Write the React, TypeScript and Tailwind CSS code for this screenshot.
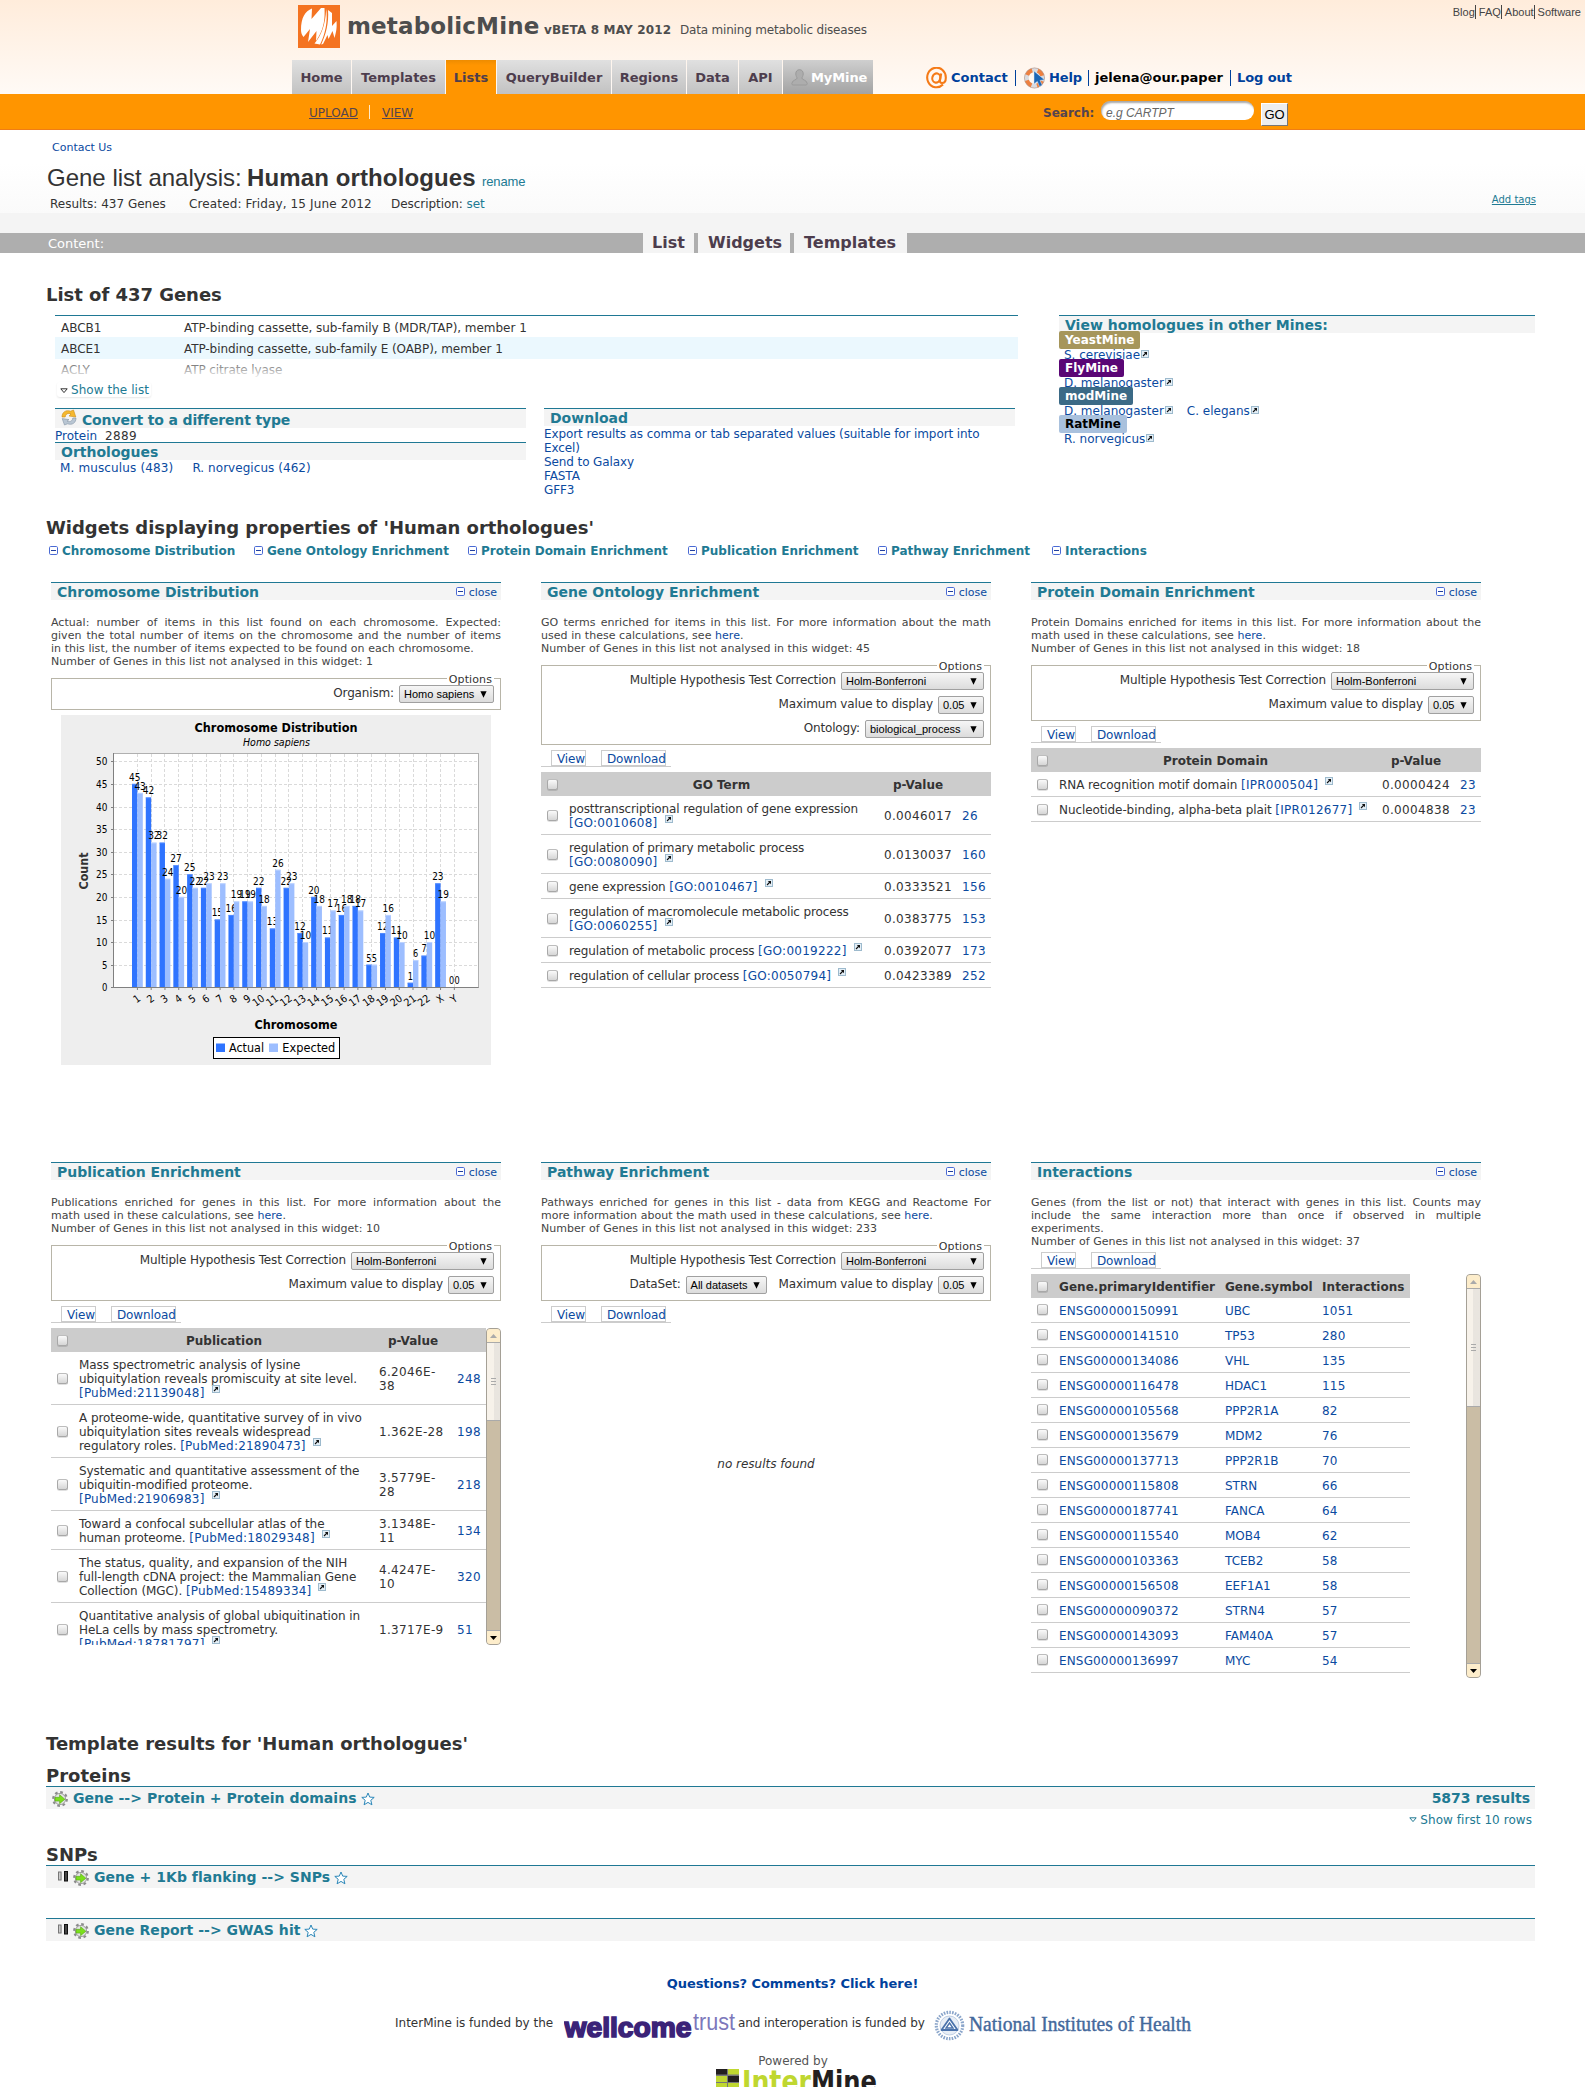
import type { ReactNode } from "react";

const ACTUAL = [45, 42, 32, 27, 25, 22, 15, 16, 19, 22, 13, 22, 12, 20, 11, 16, 18, 5, 12, 11, 1, 7, 23, 0];
const EXPECTED = [43, 32, 24, 20, 22, 23, 23, 19, 19, 18, 26, 23, 10, 18, 17, 18, 17, 5, 16, 10, 6, 10, 19, 0];
const CHROMOSOMES = [
  "1", "2", "3", "4", "5", "6", "7", "8", "9", "10", "11", "12",
  "13", "14", "15", "16", "17", "18", "19", "20", "21", "22", "X", "Y",
];

/* ---------- icons ---------- */

function MetabolicLogo() {
  return (
    <svg width="42" height="43" viewBox="0 0 42 43" className="block shrink-0">
      <rect width="42" height="43" fill="#f47321" />
      <g fill="#fff">
        <path d="M3 25C3 13 7 6 14 3.5L13.5 14L23 3H26.5C27 14 26 22 21 31L18 36L18.5 26L10 37L12 24L5.5 32C4 30 3 28 3 25Z" />
        <path d="M28.2 4C30 16 27 30 22 39.5L16.5 38.5C23 31 27.5 20 28.2 4Z" />
        <path d="M30 5L34 8V21L38.5 16C39 22 38.5 26 36.5 33L34.5 26L30.5 34L29.5 30L25 39L23.2 39.5C28 29 31 18 30 5Z" />
      </g>
    </svg>
  );
}

function MinusIcon() {
  return (
    <svg width="9" height="10" viewBox="0 0 9 10" className="inline-block shrink-0">
      <rect x="0.5" y="0.5" width="8" height="8" rx="1.2" fill="#fff" stroke="#4a6ad4" />
      <path d="M2 4.5H7" stroke="#22409f" />
    </svg>
  );
}

function ExternalIcon({ className = "" }: { className?: string }) {
  return (
    <svg width="8" height="8" viewBox="0 0 8 8" className={`inline-block shrink-0 ${className}`}>
      <rect x="0.5" y="0.5" width="7" height="7" fill="#e3eef6" stroke="#9dbacd" />
      <path d="M2 6L5 3" stroke="#111" strokeWidth="1.1" />
      <path d="M2.8 2H6V5.2Z" fill="#111" />
    </svg>
  );
}

function Triangle({ dark = false }: { dark?: boolean }) {
  return (
    <svg width="8" height="6" viewBox="0 0 8 6" className="block shrink-0">
      <path d="M0.8 0.8H7.2L4 4.6Z" fill="#fff" stroke={dark ? "#333" : "#217a93"} />
    </svg>
  );
}

function GearIcon() {
  return (
    <svg width="16" height="16" viewBox="0 0 16 16" className="block shrink-0">
      <circle cx="8" cy="8" r="6.6" fill="none" stroke="#8c8c8c" strokeWidth="2.6" strokeDasharray="2.6 2.58" />
      <circle cx="8" cy="8" r="5.6" fill="#e6e6e6" stroke="#a0a0a0" strokeWidth="1" />
      <path d="M3 6.3H7.6V3.7L12.9 8.2L7.6 12.7V10.1H3Z" fill="#7be01c" stroke="#55a516" strokeWidth="0.6" />
    </svg>
  );
}

function StarIcon() {
  return (
    <svg width="14" height="14" viewBox="0 0 14 14" className="block shrink-0">
      <path d="M7 1L8.7 5.1L13.2 5.4L9.8 8.3L10.9 12.8L7 10.4L3.1 12.8L4.2 8.3L0.8 5.4L5.3 5.1Z" fill="#fff" stroke="#2a86b8" strokeWidth="1" />
    </svg>
  );
}

function BarsIcon() {
  return (
    <svg width="10" height="11" viewBox="0 0 10 11" className="block shrink-0">
      <rect x="0.5" y="1" width="2.6" height="8" fill="#ccc" stroke="#777" />
      <rect x="6.5" y="0.5" width="3" height="9.5" fill="#444" stroke="#111" />
    </svg>
  );
}

function ConvertIcon() {
  return (
    <svg width="16" height="17" viewBox="0 0 16 17" className="block shrink-0">
      <path d="M1 8C1 3 5 0.6 9.5 2.2L12.5 1L14.8 8L8 7L10 5C7 3.6 4.5 5 4.2 8Z" fill="#f5b82e" stroke="#c98c17" strokeWidth="0.6" />
      <path d="M15 9C15 14 11 16.4 6.5 14.8L3.5 16L1.2 9.6L8 10.6L6 12.2C9 13.4 11.5 12 11.8 9Z" fill="#b9c6d3" stroke="#8394a5" strokeWidth="0.6" />
    </svg>
  );
}

function AtIcon() {
  return (
    <svg width="21" height="22" viewBox="0 0 21 22" className="block shrink-0" fill="none" stroke="#f57a17">
      <path d="M17 17.5A9.3 9.8 0 1 1 19.8 11C19.8 14.5 17.8 16 16 16C14.3 16 13.6 14.8 14 13L15.2 6.5" strokeWidth="2.1" />
      <ellipse cx="10.3" cy="11" rx="4" ry="4.6" strokeWidth="2.1" transform="rotate(15 10.3 11)" />
    </svg>
  );
}

function HelpIcon() {
  return (
    <svg width="22" height="22" viewBox="0 0 22 22" className="block shrink-0">
      <circle cx="10.5" cy="11" r="8" fill="none" stroke="#d9dbe0" strokeWidth="4.4" />
      <circle cx="10.5" cy="11" r="8" fill="none" stroke="#ee8040" strokeWidth="4" strokeDasharray="7 5.56" strokeDashoffset="-3" />
      <circle cx="10.5" cy="11" r="10.1" fill="none" stroke="#b08f80" strokeWidth="0.6" />
      <path d="M10 4V17L13.3 14.4L15.5 19.5L18.2 18.2L16 13.4L20.5 12.8Z" fill="#1c66b5" stroke="#d5e5f5" strokeWidth="0.5" />
    </svg>
  );
}

function PersonIcon() {
  return (
    <svg width="17" height="17" viewBox="0 0 17 17" className="block shrink-0">
      <path
        d="M8.5 0.7C11 0.7 12.3 2.6 12.2 5C12.1 7 11.3 8.2 10.8 9C11 11 16 11 16.2 14.5C16.2 15.6 15.5 16 14.8 16H2.2C1.5 16 0.8 15.6 0.8 14.5C1 11 6 11 6.2 9C5.7 8.2 4.9 7 4.8 5C4.7 2.6 6 0.7 8.5 0.7Z"
        fill="#adadad"
        stroke="#9a9a9a"
      />
    </svg>
  );
}

/* ---------- small controls ---------- */

function Checkbox() {
  return (
    <span className="block h-[11px] w-[11px] rounded-[2.5px] border border-[#a8a8a8] border-t-[#bdbdbd] bg-gradient-to-b from-[#fafafa] to-[#d6d6d6] shadow-[0_1px_0_rgba(0,0,0,0.12)]" />
  );
}

function Select({ label, width }: { label: string; width: string }) {
  return (
    <span
      className={`flex h-[18px] items-center justify-between rounded-[2px] border border-[#a0a0a0] bg-gradient-to-b from-[#f6f6f6] to-[#dcdcdc] pr-[6px] pl-[4px] font-['Liberation_Sans',sans-serif] text-[11px] leading-[16px] tracking-normal text-black ${width}`}
    >
      <span>{label}</span>
      <svg width="7" height="7" viewBox="0 0 7 7" className="block">
        <path d="M0.4 0.3H6.6L3.5 6.8Z" fill="#000" />
      </svg>
    </span>
  );
}

type Option = { label: string; value: string; width: string };

const HOLM: Option = { label: "Multiple Hypothesis Test Correction", value: "Holm-Bonferroni", width: "w-[143px]" };
const MAXV: Option = { label: "Maximum value to display", value: "0.05", width: "w-[46px]" };

function Options({ rows }: { rows: Option[][] }) {
  return (
    <div className="relative mt-[7px] flex flex-col gap-[6px] border border-[#b8b5a8] px-[6px] pt-[6px] pb-[6px] tracking-[-0.15px]">
      <span className="absolute -top-[6px] right-[6px] bg-white px-[2px] text-[11px] leading-[13px] tracking-[0.1px]">Options</span>
      {rows.map((row, i) => (
        <div key={i} className="relative flex h-[18px] justify-end gap-[12px]">
          {row.map((o) => (
            <div key={o.label} className="flex gap-[5px]">
              <span className="leading-[16px]">{o.label}</span>
              <Select label={o.value} width={o.width} />
            </div>
          ))}
        </div>
      ))}
    </div>
  );
}

function ViewTabs() {
  return (
    <div className="flex h-[17px] w-[130px] border-b border-[#ccc] pl-[10px] tracking-[-0.12px] text-[#0b4a9f]">
      <span className="h-[16px] w-[35px] border border-[#ccc] pl-[5px] leading-[17px]">View</span>
      <span className="ml-[15px] h-[16px] w-[65px] border border-[#ccc] pl-[5px] leading-[17px]">Download</span>
    </div>
  );
}

function Here() {
  return <span className="text-[#0b4a9f]">here</span>;
}

function Widget({ title, lines, count, children }: { title: string; lines: ReactNode[]; count: string; children?: ReactNode }) {
  return (
    <section className="w-[450px] shrink-0">
      <div className="flex h-[18px] justify-between border-t border-[#1f7894] bg-[#f4f4f4] pr-[4px] pl-[6px]">
        <h3 className="text-[14px] leading-[18px] font-bold text-[#217a93]">{title}</h3>
        <span className="flex gap-[4px] text-[11px] leading-[19px] text-[#0b4a9f]">
          <span className="pt-[3px] leading-none"><MinusIcon /></span>close
        </span>
      </div>
      <div className="mt-[16px] text-[11px] leading-[13px] tracking-[0.04px] text-[#444]">
        {lines.map((l, i) => (
          <p key={i} className={i < lines.length - 1 ? "[text-align-last:justify] whitespace-nowrap" : "whitespace-nowrap"}>
            {l}
          </p>
        ))}
        <p className="whitespace-nowrap">Number of Genes in this list not analysed in this widget: {count}</p>
      </div>
      {children}
    </section>
  );
}

type Hit = { text: string[]; id: string; p: string[]; n: string; idOnOwnLine?: boolean };

function EnrichmentTable({
  head,
  rows,
  cols,
  text = "tracking-[-0.13px]",
  link = "tracking-[0.26px]",
}: {
  head: string;
  rows: Hit[];
  cols: string;
  text?: string;
  link?: string;
}) {
  return (
    <div>
      <div className={`grid h-[24px] items-center bg-[#ccc] pt-[2px] font-bold ${cols}`}>
        <span className="pb-[2px] pl-[6px]"><Checkbox /></span>
        <span className="text-center">{head}</span>
        <span className="text-center">p-Value</span>
        <span />
      </div>
      {rows.map((r) => (
        <div key={r.id} className={`grid items-center border-b border-[#ccc] pt-[6px] pb-[4px] leading-[14px] ${cols}`}>
          <span className="pb-[2px] pl-[6px]"><Checkbox /></span>
          <span className={`pl-[5px] whitespace-nowrap ${text}`}>
            {r.text.map((t, i) => (
              <span key={i}>
                {t}
                {i < r.text.length - 1 || r.idOnOwnLine ? <br /> : " "}
              </span>
            ))}
            <span className={`text-[#0b4a9f] ${link}`}>[{r.id}]</span>
            <ExternalIcon className="relative -top-[4px] ml-[7px] align-baseline" />
          </span>
          <span className="pl-[5px] tracking-[0.33px]">
            {r.p.map((t) => (
              <span key={t} className="block">{t}</span>
            ))}
          </span>
          <span className="pl-[5px] tracking-[0.33px] text-[#0b4a9f]">{r.n}</span>
        </div>
      ))}
    </div>
  );
}

function Scrollbar({ thumb }: { thumb: string }) {
  return (
    <div className="flex w-[15px] shrink-0 flex-col overflow-hidden rounded-[4px] border border-[#a5a096] bg-[#cabda5]">
      <span className="flex h-[14px] shrink-0 items-center justify-center border-b border-[#aaa] bg-[#fdedcb]">
        <svg width="7" height="4" viewBox="0 0 7 4"><path d="M0 4L3.5 0L7 4Z" fill="#aaa" /></svg>
      </span>
      <span className={`flex shrink-0 flex-col items-center justify-center gap-[2px] border-b border-[#aaa] bg-gradient-to-r from-[#f7f2ea] from-50% to-[#e9e5df] to-50% ${thumb}`}>
        <i className="block h-px w-[5px] bg-[#aaa]" />
        <i className="block h-px w-[5px] bg-[#aaa]" />
        <i className="block h-px w-[5px] bg-[#aaa]" />
      </span>
      <span className="mt-auto flex h-[14px] shrink-0 items-center justify-center border-t border-[#aaa] bg-[#fdedcb]">
        <svg width="7" height="4" viewBox="0 0 7 4"><path d="M0 0L3.5 4L7 0Z" fill="#000" /></svg>
      </span>
    </div>
  );
}

/* ---------- chart ---------- */

const X0 = 76.4;
const STEP = 13.78;
const BASE = 272.3;
const UNIT = 4.52;

function BarSeries({ data, offset, color, edge }: { data: number[]; offset: number; color: string; edge: string }) {
  return (
    <g>
      {data.map((v, i) => {
        const x = X0 + i * STEP + offset;
        const y = BASE - v * UNIT;
        const label = String(v);
        return (
          <g key={i}>
            {v > 0 && <rect x={x} y={y} width="5.4" height={v * UNIT} fill={color} />}
            {v > 0 && <path d={`M${x} ${y + 0.4}H${x + 5.4}`} stroke={edge} strokeWidth="0.8" />}
            <text
              x={x + 2.7}
              y={y - 3.2}
              textAnchor="middle"
              fontSize="10.5"
              textLength={label.length === 2 ? 11.4 : 5.2}
              lengthAdjust="spacingAndGlyphs"
            >
              {label}
            </text>
          </g>
        );
      })}
    </g>
  );
}

function ChromosomeChart() {
  const ticks = [0, 5, 10, 15, 20, 25, 30, 35, 40, 45, 50];
  return (
    <svg width="430" height="350" viewBox="0 0 430 350" className="mt-[5px] ml-[10px] block font-['DejaVu_Sans',sans-serif]">
      <rect width="430" height="350" fill="#eee" />
      <text x="215" y="16.5" textAnchor="middle" fontSize="12" fontWeight="700" textLength="163" lengthAdjust="spacingAndGlyphs">Chromosome Distribution</text>
      <text x="215.5" y="31" textAnchor="middle" fontSize="10" fontStyle="italic" textLength="67" lengthAdjust="spacingAndGlyphs">Homo sapiens</text>
      <rect x="52.5" y="38.5" width="365" height="234" fill="#fff" stroke="#b0b0b0" />
      <g stroke="#dadada" strokeDasharray="3 2">
        {ticks.slice(1).map((t) => <path key={t} d={`M53 ${Math.round(BASE - t * UNIT) + 0.5}H417`} />)}
        {CHROMOSOMES.map((c, i) => <path key={c} d={`M${Math.floor(X0 + i * STEP) + 0.5} 39V272`} />)}
      </g>
      <BarSeries data={ACTUAL} offset={-5.4} color="#2f74ff" edge="#5a90ff" />
      <BarSeries data={EXPECTED} offset={0} color="#9dbeff" edge="#c4d8ff" />
      <path d="M52.5 38V272.5H417.5" fill="none" stroke="#808080" />
      {ticks.map((t) => (
        <g key={t}>
          <path d={`M50 ${Math.round(BASE - t * UNIT) + 0.5}H52.5`} stroke="#808080" />
          <text x="46.5" y={BASE - t * UNIT + 4} textAnchor="end" fontSize="10.5" textLength={t >= 10 ? 11.4 : 5.4} lengthAdjust="spacingAndGlyphs">{t}</text>
        </g>
      ))}
      {CHROMOSOMES.map((c, i) => {
        const x = X0 + i * STEP;
        return (
          <g key={c}>
            <path d={`M${x} 272.5V275`} stroke="#808080" />
            <text transform={`translate(${x + 4} 285) rotate(-36)`} textAnchor="end" fontSize="10.5" textLength={c.length === 2 ? 12 : 6} lengthAdjust="spacingAndGlyphs">{c}</text>
          </g>
        );
      })}
      <text transform="translate(27 156) rotate(-90)" textAnchor="middle" fontSize="12" fontWeight="700" fill="#333" textLength="37" lengthAdjust="spacingAndGlyphs">Count</text>
      <text x="235" y="314" textAnchor="middle" fontSize="12" fontWeight="700" textLength="83" lengthAdjust="spacingAndGlyphs">Chromosome</text>
      <rect x="152.5" y="322.5" width="126" height="21" fill="#fff" stroke="#000" />
      <rect x="155" y="328.5" width="9" height="8.5" fill="#2f74ff" />
      <text x="168" y="337" fontSize="12" textLength="35" lengthAdjust="spacingAndGlyphs">Actual</text>
      <rect x="208" y="328.5" width="9" height="8.5" fill="#9dbeff" />
      <text x="221.3" y="337" fontSize="12" textLength="53" lengthAdjust="spacingAndGlyphs">Expected</text>
    </svg>
  );
}

/* ---------- data ---------- */

const GO_ROWS: Hit[] = [
  { text: ["posttranscriptional regulation of gene expression"], id: "GO:0010608", p: ["0.0046017"], n: "26", idOnOwnLine: true },
  { text: ["regulation of primary metabolic process"], id: "GO:0080090", p: ["0.0130037"], n: "160", idOnOwnLine: true },
  { text: ["gene expression"], id: "GO:0010467", p: ["0.0333521"], n: "156" },
  { text: ["regulation of macromolecule metabolic process"], id: "GO:0060255", p: ["0.0383775"], n: "153", idOnOwnLine: true },
  { text: ["regulation of metabolic process"], id: "GO:0019222", p: ["0.0392077"], n: "173" },
  { text: ["regulation of cellular process"], id: "GO:0050794", p: ["0.0423389"], n: "252" },
];

const DOMAIN_ROWS: Hit[] = [
  { text: ["RNA recognition motif domain"], id: "IPR000504", p: ["0.0000424"], n: "23" },
  { text: ["Nucleotide-binding, alpha-beta plait"], id: "IPR012677", p: ["0.0004838"], n: "23" },
];

const PUB_ROWS: Hit[] = [
  { text: ["Mass spectrometric analysis of lysine", "ubiquitylation reveals promiscuity at site level."], id: "PubMed:21139048", p: ["6.2046E-", "38"], n: "248", idOnOwnLine: true },
  { text: ["A proteome-wide, quantitative survey of in vivo", "ubiquitylation sites reveals widespread", "regulatory roles."], id: "PubMed:21890473", p: ["1.362E-28"], n: "198" },
  { text: ["Systematic and quantitative assessment of the", "ubiquitin-modified proteome."], id: "PubMed:21906983", p: ["3.5779E-", "28"], n: "218", idOnOwnLine: true },
  { text: ["Toward a confocal subcellular atlas of the", "human proteome."], id: "PubMed:18029348", p: ["3.1348E-", "11"], n: "134" },
  { text: ["The status, quality, and expansion of the NIH", "full-length cDNA project: the Mammalian Gene", "Collection (MGC)."], id: "PubMed:15489334", p: ["4.4247E-", "10"], n: "320" },
  { text: ["Quantitative analysis of global ubiquitination in", "HeLa cells by mass spectrometry."], id: "PubMed:18781797", p: ["1.3717E-9"], n: "51", idOnOwnLine: true },
];

const INTERACTIONS: [string, string, string][] = [
  ["ENSG00000150991", "UBC", "1051"],
  ["ENSG00000141510", "TP53", "280"],
  ["ENSG00000134086", "VHL", "135"],
  ["ENSG00000116478", "HDAC1", "115"],
  ["ENSG00000105568", "PPP2R1A", "82"],
  ["ENSG00000135679", "MDM2", "76"],
  ["ENSG00000137713", "PPP2R1B", "70"],
  ["ENSG00000115808", "STRN", "66"],
  ["ENSG00000187741", "FANCA", "64"],
  ["ENSG00000115540", "MOB4", "62"],
  ["ENSG00000103363", "TCEB2", "58"],
  ["ENSG00000156508", "EEF1A1", "58"],
  ["ENSG00000090372", "STRN4", "57"],
  ["ENSG00000143093", "FAM40A", "57"],
  ["ENSG00000136997", "MYC", "54"],
];

const TABS: [string, string][] = [
  ["Home", "w-[59px]"],
  ["Templates", "w-[93px]"],
  ["Lists", "w-[50px]"],
  ["QueryBuilder", "w-[114px]"],
  ["Regions", "w-[74px]"],
  ["Data", "w-[51px]"],
  ["API", "w-[43px]"],
];

const MINES: { name: string; cls: string; links: string[] }[] = [
  { name: "YeastMine", cls: "bg-[#a6965b] text-white", links: ["S. cerevisiae"] },
  { name: "FlyMine", cls: "bg-[#5a0675] text-white", links: ["D. melanogaster"] },
  { name: "modMine", cls: "bg-[#3b6a86] text-white", links: ["D. melanogaster", "C. elegans"] },
  { name: "RatMine", cls: "bg-[#a9c1dd] text-black", links: ["R. norvegicus"] },
];

const WIDGET_LINKS: [string, string][] = [
  ["Chromosome Distribution", "w-[205px]"],
  ["Gene Ontology Enrichment", "w-[214px]"],
  ["Protein Domain Enrichment", "w-[220px]"],
  ["Publication Enrichment", "w-[190px]"],
  ["Pathway Enrichment", "w-[174px]"],
  ["Interactions", "w-[110px]"],
];

/* ---------- page sections ---------- */

function Header() {
  return (
    <header>
      <div className="flex h-[94px] justify-between bg-gradient-to-b from-[#ffecdb] to-[#fffaf6]">
        <div className="w-[1310px] pl-[292px]">
          <div className="flex h-[60px] pt-[5px] pl-[6px] text-[#4d4d4d]">
            <MetabolicLogo />
            <div className="flex items-baseline pl-[7px] whitespace-nowrap">
              <span className="w-[197px] text-[23px] leading-[42px] font-bold tracking-[0.15px]">metabolicMine</span>
              <span className="w-[136px] text-[12px] font-bold tracking-[0.15px]">vBETA 8 MAY 2012</span>
              <span className="text-[12px] tracking-[-0.19px]">Data mining metabolic diseases</span>
            </div>
          </div>
          <div className="flex h-[34px] text-[13px] font-bold">
            <nav className="flex gap-px text-[#4d3d4d]">
              {TABS.map(([t, w]) => (
                <span
                  key={t}
                  className={`${w} text-center leading-[35px] ${t === "Lists" ? "bg-gradient-to-b from-[#ee8c00] to-[#ff9500] to-15%" : "bg-gradient-to-b from-[#e0e0e0] to-[#c2c2c2]"}`}
                >
                  {t}
                </span>
              ))}
              <span className="flex w-[90px] items-center gap-[3px] bg-gradient-to-b from-[#cfcfcf] to-[#a3a3a3] pl-[8px] text-white">
                <PersonIcon />
                <span className="leading-[35px] tracking-[-0.1px]">MyMine</span>
              </span>
            </nav>
            <div className="ml-[53px] flex items-center pt-[2px] text-[#00419c]">
              <AtIcon />
              <span className="w-[68px] shrink-0 pl-[4px]">Contact</span>
              <i className="block h-[16px] w-px bg-[#00419c]" />
              <span className="flex w-[72px] shrink-0 items-center pl-[8px]">
                <HelpIcon />
                <span className="pl-[3px] tracking-[-0.1px]">Help</span>
              </span>
              <i className="block h-[16px] w-px bg-[#00419c]" />
              <span className="w-[141px] shrink-0 pl-[6px] text-black">jelena@our.paper</span>
              <i className="block h-[16px] w-px bg-[#00419c]" />
              <span className="pl-[6px] tracking-[-0.1px] whitespace-nowrap">Log out</span>
            </div>
          </div>
        </div>
        <div className="flex gap-[3px] pt-[5px] pr-[4px] font-['Liberation_Sans',sans-serif] text-[11px] leading-[14px] text-[#444]">
          <span className="h-[14px] border-r border-[#444]">Blog</span>
          <span className="h-[14px] border-r border-[#444]">FAQ</span>
          <span className="h-[14px] border-r border-[#444]">About</span>
          <span>Software</span>
        </div>
      </div>
      <div className="flex h-[36px] border-b border-[#ef7d16] bg-[#ff9500] pl-[309px] text-[#54444f]">
        <span className="mt-[9px] h-[20px] w-[60px] leading-[20px] underline">UPLOAD</span>
        <i className="mt-[11px] block h-[14px] w-px bg-[#ffe9c8]" />
        <span className="mt-[9px] w-[661px] pl-[12px] leading-[20px] underline">VIEW</span>
        <span className="mt-[9px] w-[58px] pl-[12px] leading-[20px] font-bold">Search:</span>
        <span className="mt-[7px] ml-[12px] h-[19px] w-[153px] rounded-[9px] bg-white pl-[5px] font-['Liberation_Sans',sans-serif] text-[12px] leading-[25px] text-[#666] italic shadow-[inset_1px_2px_2px_rgba(0,0,0,0.35)]">
          e.g CARTPT
        </span>
        <span className="mt-[9px] ml-[7px] h-[23px] w-[27px] border border-[#fff] border-r-[#777] border-b-[#777] bg-[#ededed] text-center font-['Liberation_Sans',sans-serif] text-[13px] leading-[22px] text-black">
          GO
        </span>
      </div>
    </header>
  );
}

function PageTitle() {
  return (
    <div>
      <div className="h-[83px] bg-gradient-to-b from-white from-40% to-[#fafafa]">
        <div className="pt-[10px] pl-[52px] text-[11px] leading-[14px] text-[#0b4a9f]">
          <span className="relative top-[1px]">Contact Us</span>
        </div>
        <div className="flex h-[38px] items-baseline pt-[9px] pl-[47px] font-['Liberation_Sans',sans-serif] text-[24px] leading-[30px] whitespace-nowrap text-[#333]">
          <span className="w-[200px]">Gene list analysis:</span>
          <span className="w-[235px] font-bold tracking-[0.12px]">Human orthologues</span>
          <span className="text-[13px] tracking-[-0.1px] text-[#217a93]">rename</span>
        </div>
        <div className="flex justify-between pr-[49px] pl-[50px] leading-[18px]">
          <div className="flex pt-[3px]">
            <span className="w-[139px]">Results: 437 Genes</span>
            <span className="w-[202px] tracking-[0.13px]">Created: Friday, 15 June 2012</span>
            <span className="tracking-[-0.05px]">Description: <span className="text-[#217a93]">set</span></span>
          </div>
          <span className="text-[10px] leading-[16px] text-[#217a93] underline">Add tags</span>
        </div>
      </div>
      <div className="h-[20px] bg-[#f4f4f4]" />
      <div className="flex h-[20px] bg-[#aeaeae]">
        <span className="w-[643px] pl-[48px] text-[13px] leading-[21px] text-white">Content:</span>
        <nav className="flex w-[264px] bg-[#f4f4f4] text-[16px] leading-[19px] font-bold text-[#4d3d4d]">
          <span className="w-[51px] pl-[9px]">List</span>
          <i className="block w-[4px] bg-[#aeaeae]" />
          <span className="w-[92px] pl-[10px]">Widgets</span>
          <i className="block w-[4px] bg-[#aeaeae]" />
          <span className="pl-[10px]">Templates</span>
        </nav>
      </div>
    </div>
  );
}

function PanelTitle({ children }: { children: ReactNode }) {
  return (
    <h3 className="h-[18px] border-t border-[#1f7894] bg-[#f4f4f4] pl-[6px] text-[14px] leading-[18px] font-bold whitespace-nowrap text-[#217a93]">
      {children}
    </h3>
  );
}

function ListSection() {
  return (
    <section className="h-[262px] pt-[30px]">
      <h2 className="mb-[8px] pl-[46px] text-[18px] leading-[24px] font-bold tracking-[-0.03px]">List of 437 Genes</h2>
      <div className="flex pl-[55px]">
        <div className="w-[963px]">
          <div className="relative border-t border-[#1f7894] tracking-[-0.03px]">
            <div className="flex h-[21px] pl-[6px] leading-[25px]">
              <span className="w-[123px]">ABCB1</span>
              <span>ATP-binding cassette, sub-family B (MDR/TAP), member 1</span>
            </div>
            <div className="flex h-[22px] bg-[#ebf8fe] pl-[6px] leading-[25px]">
              <span className="w-[123px]">ABCE1</span>
              <span className="tracking-[-0.08px]">ATP-binding cassette, sub-family E (OABP), member 1</span>
            </div>
            <div className="flex h-[21px] pl-[6px] leading-[23px]">
              <span className="w-[123px]">ACLY</span>
              <span className="tracking-[-0.1px]">ATP citrate lyase</span>
            </div>
            <div className="absolute inset-x-0 bottom-0 h-[21px] bg-gradient-to-b from-white/10 to-white to-95%" />
          </div>
          <div className="mt-[2px] ml-[2px] flex h-[15px] w-[94px] items-center gap-[3px] rounded-[3px] pt-[2px] pl-[3px] text-[#217a93] shadow-[0_1px_2px_rgba(0,0,0,0.1)]">
            <Triangle dark />
            <span className="leading-[13px] tracking-[0.05px] whitespace-nowrap">Show the list</span>
          </div>
          <div className="mt-[11px] flex">
            <div className="w-[471px]">
              <div className="flex h-[20px] border-t border-[#1f7894] bg-[#f4f4f4] pl-[6px] text-[14px] leading-[22px] font-bold tracking-[-0.15px] text-[#217a93]">
                <ConvertIcon />
                <span className="pl-[5px]">Convert to a different type</span>
              </div>
              <div className="h-[14px] leading-[17px]">
                <span className="text-[#0b4a9f]">Protein</span>
                <span className="pl-[8px] tracking-[0.3px]">2889</span>
              </div>
              <PanelTitle>Orthologues</PanelTitle>
              <div className="flex gap-[19px] pl-[5px] leading-[16px] tracking-[0.14px] text-[#0b4a9f]">
                <span>M. musculus (483)</span>
                <span className="tracking-[0.05px]">R. norvegicus (462)</span>
              </div>
            </div>
            <div className="ml-[18px] w-[471px]">
              <PanelTitle>Download</PanelTitle>
              <div className="pt-[1px] leading-[14px] tracking-[-0.1px] text-[#0b4a9f]">
                <p>Export results as comma or tab separated values (suitable for import into<br />Excel)</p>
                <p>Send to Galaxy</p>
                <p>FASTA</p>
                <p>GFF3</p>
              </div>
            </div>
          </div>
        </div>
        <div className="ml-[41px] w-[476px]">
          <PanelTitle>View homologues in other Mines:</PanelTitle>
          <div className="-mt-[2px]">
            {MINES.map((m) => (
              <div key={m.name} className="h-[28px]">
                <span className={`relative z-10 block h-[18px] w-fit rounded-[2px] px-[6px] leading-[19px] font-bold ${m.cls}`}>{m.name}</span>
                <div className="-mt-[1px] flex gap-[14px] pl-[5px] leading-[14px] text-[#0b4a9f]">
                  {m.links.map((l) => (
                    <span key={l} className="flex items-start">
                      {l}
                      <ExternalIcon className="mt-[2px] ml-px" />
                    </span>
                  ))}
                </div>
              </div>
            ))}
          </div>
        </div>
      </div>
    </section>
  );
}

function TemplateBar({ name, bars, results }: { name: string; bars?: boolean; results?: string }) {
  return (
    <div className="flex h-[23px] items-center border-t border-[#1f7894] bg-[#f4f4f4] pl-[6px] text-[14px] font-bold text-[#217a93]">
      {bars && (
        <span className="mr-[5px] ml-[6px] pb-[1px]">
          <BarsIcon />
        </span>
      )}
      <span className="pt-[2px]"><GearIcon /></span>
      <span className="pl-[5px] leading-[22px] tracking-[0.04px]">{name}</span>
      <span className="pt-px pl-[4px]"><StarIcon /></span>
      {results && <span className="mr-[5px] ml-auto leading-[22px]">{results}</span>}
    </div>
  );
}

function TemplatesSection() {
  return (
    <section className="h-[243px] pr-[50px] pl-[46px]">
      <h2 className="text-[18px] leading-[24px] font-bold">Template results for 'Human orthologues'</h2>
      <h2 className="mt-[8px] h-[22px] text-[18px] leading-[24px] font-bold">Proteins</h2>
      <TemplateBar name="Gene --> Protein + Protein domains" results="5873 results" />
      <div className="mt-[2px] flex items-center justify-end gap-[3px] pr-[3px] leading-[18px] tracking-[0.06px] text-[#217a93]">
        <Triangle />
        Show first 10 rows
      </div>
      <h2 className="mt-[14px] h-[22px] text-[18px] leading-[24px] font-bold">SNPs</h2>
      <TemplateBar name="Gene + 1Kb flanking --> SNPs" bars />
      <div className="h-[30px]" />
      <TemplateBar name="Gene Report --> GWAS hit" bars />
    </section>
  );
}

function NihSeal() {
  return (
    <svg width="31" height="31" viewBox="0 0 31 31" className="block shrink-0" fill="none" stroke="#4a72ab">
      <circle cx="15.5" cy="15.5" r="13.2" stroke="#8aa5ca" strokeWidth="3.2" strokeDasharray="1.6 1.2" />
      <circle cx="15.5" cy="15.5" r="9.5" fill="#e8eef6" stroke="#b3c5de" strokeWidth="0.8" />
      <path d="M15.5 8.5L23.5 20H7.5Z" fill="#fff" strokeWidth="1.8" strokeLinejoin="round" />
      <path d="M15.5 13L19 18H12Z" strokeWidth="1.4" />
    </svg>
  );
}

function Footer() {
  return (
    <footer>
      <p className="text-center text-[13px] leading-[18px] font-bold tracking-[-0.07px] text-[#00419c]">Questions? Comments? Click here!</p>
      <div className="mt-[17px] flex h-[31px] pl-[395px] leading-[26px] whitespace-nowrap">
        <span className="w-[169px]">InterMine is funded by the</span>
        <svg width="174" height="31" viewBox="0 0 174 31" className="block font-['Liberation_Sans',sans-serif]">
          <text x="0.5" y="26.5" fontSize="28.5" fontWeight="700" fill="#3b2378" stroke="#3b2378" strokeWidth="1.7" textLength="127" lengthAdjust="spacingAndGlyphs">wellcome</text>
          <text x="129" y="20" fontSize="24" fill="#7d78bb" textLength="42" lengthAdjust="spacingAndGlyphs">trust</text>
        </svg>
        <span className="w-[196px] tracking-[-0.09px]">and interoperation is funded by</span>
        <NihSeal />
        <svg width="228" height="31" viewBox="0 0 228 31" className="block font-['Liberation_Serif',serif]">
          <text x="4" y="20.5" fontSize="20" fill="#44699c" stroke="#44699c" strokeWidth="0.4" textLength="222" lengthAdjust="spacingAndGlyphs">National Institutes of Health</text>
        </svg>
      </div>
      <p className="mt-[12px] pl-px text-center leading-[16px] text-[#555]">Powered by</p>
      <svg width="162" height="20" viewBox="0 0 162 20" className="ml-[716px] block overflow-hidden font-['DejaVu_Sans',sans-serif]">
        <rect x="0" y="0" width="23" height="20" fill="#777" />
        <rect x="0" y="0" width="11" height="5.5" fill="#231f20" />
        <rect x="12" y="0" width="11" height="5.5" fill="#bfd730" />
        <rect x="0" y="7" width="11" height="6" fill="#bfd730" />
        <rect x="12" y="7" width="11" height="6" fill="#231f20" />
        <rect x="0" y="14" width="11" height="6" fill="#bfd730" />
        <rect x="12" y="14" width="11" height="6" fill="#bfd730" />
        <text x="26" y="22.5" fontSize="30" fontWeight="700" fill="#bfd730" textLength="69" lengthAdjust="spacingAndGlyphs">Inter</text>
        <text x="95" y="22.5" fontSize="30" fontWeight="700" fill="#231f20" textLength="66" lengthAdjust="spacingAndGlyphs">Mine</text>
      </svg>
    </footer>
  );
}

export default function App() {
  return (
    <div className="h-[2087px] w-[1585px] overflow-hidden bg-white font-['DejaVu_Sans',sans-serif] text-[12px] leading-[14px] text-[#333]">
      <Header />
      <PageTitle />
      <ListSection />
      <section>
        <h2 className="pt-[1px] pl-[46px] text-[18px] leading-[24px] font-bold tracking-[-0.03px]">Widgets displaying properties of 'Human orthologues'</h2>
        <nav className="mt-[3px] flex h-[16px] pl-[49px] leading-[16px] font-bold whitespace-nowrap text-[#217a93]">
          {WIDGET_LINKS.map(([t, w]) => (
            <span key={t} className={`flex gap-[4px] ${w}`}>
              <span className="pt-[1px] leading-none"><MinusIcon /></span>
              {t}
            </span>
          ))}
        </nav>
        <div className="flex h-[580px] gap-[40px] pt-[23px] pl-[51px]">
          <Widget
            title="Chromosome Distribution"
            lines={[
              "Actual: number of items in this list found on each chromosome. Expected:",
              "given the total number of items on the chromosome and the number of items",
              "in this list, the number of items expected to be found on each chromosome.",
            ]}
            count="1"
          >
            <div className="mt-[10px]">
              <Options rows={[[{ label: "Organism:", value: "Homo sapiens", width: "w-[95px]" }]]} />
            </div>
            <ChromosomeChart />
          </Widget>
          <Widget
            title="Gene Ontology Enrichment"
            lines={["GO terms enriched for items in this list. For more information about the math", <>used in these calculations, see <Here />.</>]}
            count="45"
          >
            <div className="mt-[10px] mb-[5px]">
              <Options rows={[[HOLM], [MAXV], [{ label: "Ontology:", value: "biological_process", width: "w-[119px]" }]]} />
            </div>
            <ViewTabs />
            <div className="mt-[5px]">
              <EnrichmentTable head="GO Term" rows={GO_ROWS} cols="grid-cols-[23px_315px_78px_34px]" />
            </div>
          </Widget>
          <Widget
            title="Protein Domain Enrichment"
            lines={["Protein Domains enriched for items in this list. For more information about the", <>math used in these calculations, see <Here />.</>]}
            count="18"
          >
            <div className="mt-[10px] mb-[5px]">
              <Options rows={[[HOLM], [MAXV]]} />
            </div>
            <ViewTabs />
            <div className="mt-[5px]">
              <EnrichmentTable head="Protein Domain" rows={DOMAIN_ROWS} cols="grid-cols-[23px_323px_78px_26px]" text="tracking-[-0.09px]" />
            </div>
          </Widget>
        </div>
        <div className="flex h-[593px] gap-[40px] pt-[23px] pl-[51px]">
          <Widget
            title="Publication Enrichment"
            lines={["Publications enriched for genes in this list. For more information about the", <>math used in these calculations, see <Here />.</>]}
            count="10"
          >
            <div className="mt-[10px] mb-[5px]">
              <Options rows={[[HOLM], [MAXV]]} />
            </div>
            <ViewTabs />
            <div className="mt-[5px] flex h-[317px] overflow-hidden">
              <div className="w-[435px]">
                <EnrichmentTable head="Publication" rows={PUB_ROWS} cols="grid-cols-[23px_300px_78px_34px]" text="tracking-[-0.07px]" link="tracking-[0.2px]" />
              </div>
              <Scrollbar thumb="h-[78px]" />
            </div>
          </Widget>
          <Widget
            title="Pathway Enrichment"
            lines={["Pathways enriched for genes in this list - data from KEGG and Reactome For", <>more information about the math used in these calculations, see <Here />.</>]}
            count="233"
          >
            <div className="mt-[10px] mb-[5px]">
              <Options rows={[[HOLM], [{ label: "DataSet:", value: "All datasets", width: "w-[81px]" }, MAXV]]} />
            </div>
            <ViewTabs />
            <p className="mt-[134px] text-center italic">no results found</p>
          </Widget>
          <Widget
            title="Interactions"
            lines={[
              "Genes (from the list or not) that interact with genes in this list. Counts may",
              "include the same interaction more than once if observed in multiple",
              "experiments.",
            ]}
            count="37"
          >
            <div className="mt-[4px]"><ViewTabs /></div>
            <div className="mt-[5px] flex h-[404px] justify-between">
              <div className="w-[379px]">
                <div className="grid h-[24px] grid-cols-[23px_166px_97px_93px] items-center bg-[#ccc] pt-[2px] font-bold">
                  <span className="pb-[2px] pl-[6px]"><Checkbox /></span>
                  <span className="pl-[5px] tracking-[0.04px]">Gene.primaryIdentifier</span>
                  <span className="pl-[5px]">Gene.symbol</span>
                  <span className="pl-[5px] tracking-[0.06px]">Interactions</span>
                </div>
                {INTERACTIONS.map(([id, sym, n]) => (
                  <div key={id} className="grid h-[25px] grid-cols-[23px_166px_97px_93px] items-center border-b border-[#ccc] pt-px text-[#0b4a9f]">
                    <span className="pb-[2px] pl-[6px]"><Checkbox /></span>
                    <span className="pl-[5px] tracking-[0.15px]">{id}</span>
                    <span className="pl-[5px]">{sym}</span>
                    <span className="pl-[5px] tracking-[0.2px]">{n}</span>
                  </div>
                ))}
              </div>
              <Scrollbar thumb="h-[118px]" />
            </div>
          </Widget>
        </div>
      </section>
      <TemplatesSection />
      <Footer />
    </div>
  );
}
